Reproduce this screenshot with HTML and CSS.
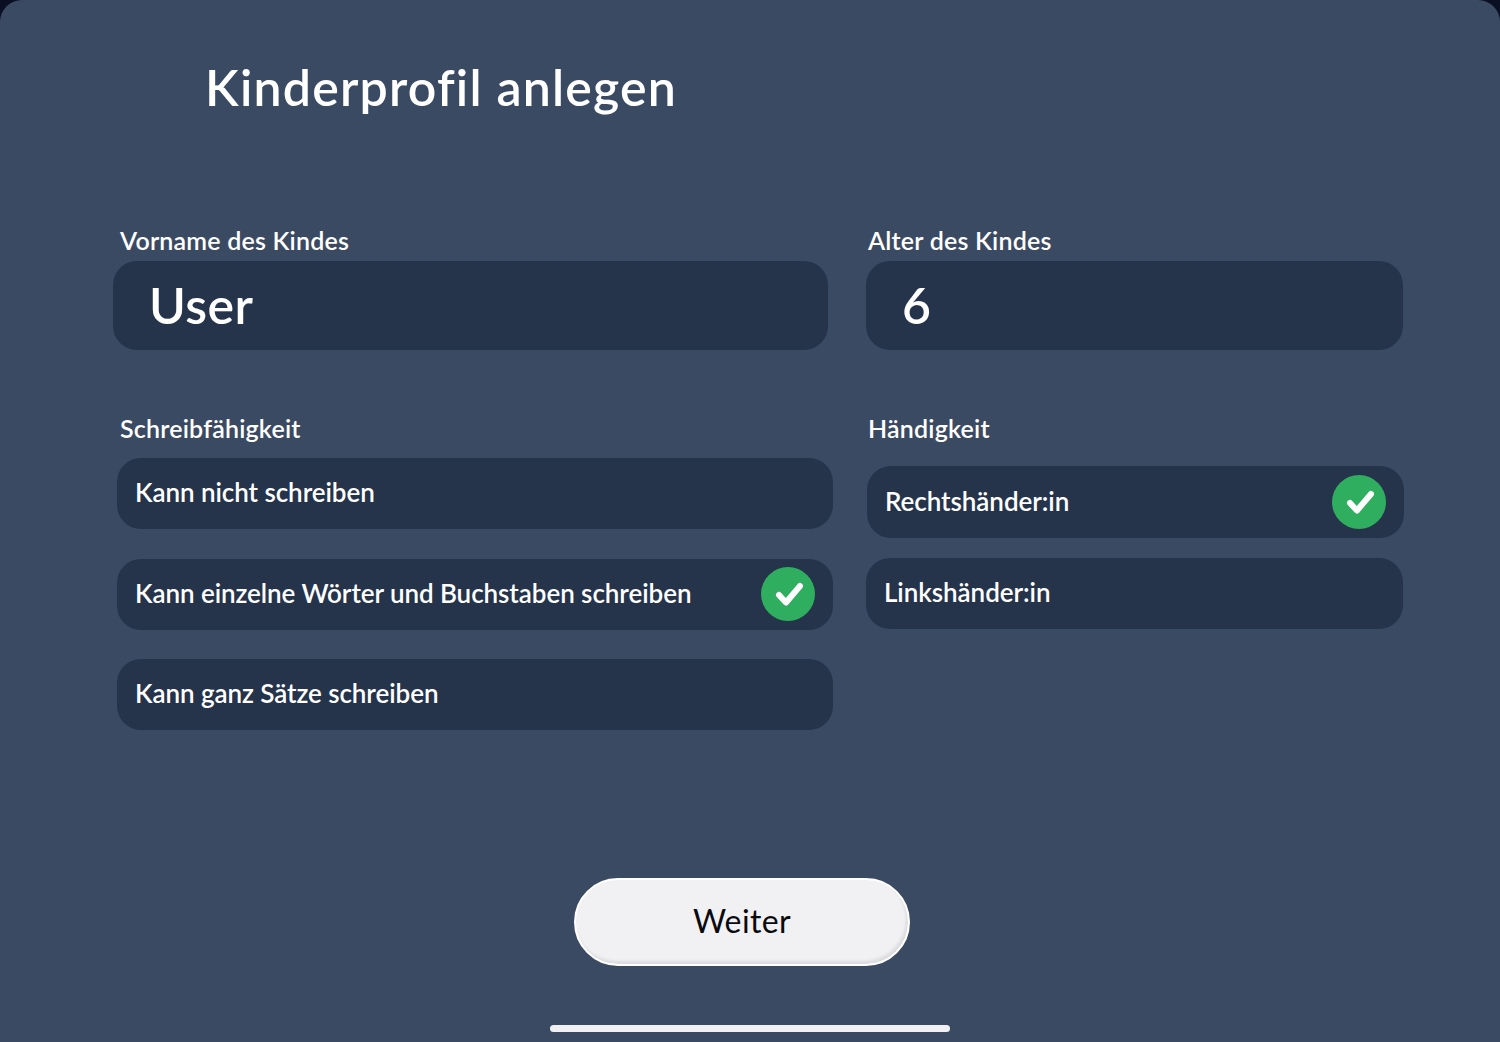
FILE: index.html
```html
<!DOCTYPE html>
<html lang="de">
<head>
    <meta charset="UTF-8">
    <meta name="viewport" content="width=device-width, initial-scale=1.0">
    <title>Kinderprofil anlegen</title>
    <link rel="stylesheet" href="styles.css">
</head>
<body>
    <div class="screen">
        <h1 class="title">Kinderprofil anlegen</h1>
        <div class="form">
            <div class="field">
                <span class="label">Vorname des Kindes</span>
                <div class="input">User</div>
            </div>
            <div class="field field-right">
                <span class="label">Alter des Kindes</span>
                <div class="input">6</div>
            </div>
            <div class="field choices">
                <span class="label">Schreibfähigkeit</span>
                <div class="option"><span class="option-text">Kann nicht schreiben</span></div>
                <div class="option">
                    <span class="option-text">Kann einzelne Wörter und Buchstaben schreiben</span>
                    <svg class="check" viewBox="0 0 54 54"><circle cx="27" cy="27" r="27" fill="#2fae60"/><path d="M18 28l7 7.500L39 19" fill="none" stroke="#fff" stroke-width="6" stroke-linecap="round" stroke-linejoin="round"/></svg>
                </div>
                <div class="option"><span class="option-text">Kann ganz Sätze schreiben</span></div>
            </div>
            <div class="field field-right choices hand">
                <span class="label">Händigkeit</span>
                <div class="option option-first">
                    <span class="option-text">Rechtshänder:in</span>
                    <svg class="check" viewBox="0 0 54 54"><circle cx="27" cy="27" r="27" fill="#2fae60"/><path d="M18 28l7 7.500L39 19" fill="none" stroke="#fff" stroke-width="6" stroke-linecap="round" stroke-linejoin="round"/></svg>
                </div>
                <div class="option"><span class="option-text">Linkshänder:in</span></div>
            </div>
        </div>
        <button class="next-btn">Weiter</button>
        <div class="home-bar"></div>
    </div>
</body>
</html>
```

FILE: styles.css
```css
html, body {
    margin: 0;
    height: 100%;
    background: #0b0f24;
}
body {
    font-family: "Lato", "Noto Sans", sans-serif;
    color: #fff;
    overflow: hidden;
}
.screen {
    height: 1042px;
    box-sizing: border-box;
    background: #3b4a63;
    border-radius: 22px 22px 0 0;
    padding-top: 55px;
    display: flex;
    flex-direction: column;
}
.title {
    margin: 0 0 0 205px;
    font-size: 50px;
    line-height: 64px;
    font-weight: 600;
    letter-spacing: 1.2px;
}
.form {
    margin: 106px 0 0 113px;
    display: grid;
    grid-template-columns: 715px 537px;
    column-gap: 38px;
    row-gap: 63px;
}
.label {
    display: block;
    margin: 0 0 5px 7px;
    font-size: 25px;
    line-height: 31px;
    font-weight: 600;
    letter-spacing: 0.2px;
}
.field-right .label {
    margin-left: 2px;
}
.input {
    height: 89px;
    box-sizing: border-box;
    padding: 0 0 2px 36px;
    display: flex;
    align-items: center;
    background: #25344b;
    border-radius: 24px;
    font-size: 50px;
    font-weight: 600;
    letter-spacing: 0.4px;
}
.choices {
    display: flex;
    flex-direction: column;
}
.choices .label {
    margin-bottom: 14px;
}
.option {
    width: 716px;
    height: 71px;
    box-sizing: border-box;
    margin: 0 0 29.5px 4px;
    padding: 0 18px;
    display: flex;
    align-items: center;
    justify-content: space-between;
    background: #25344b;
    border-radius: 24px;
    font-size: 26px;
    font-weight: 600;
    letter-spacing: -0.06px;
}
.option-text {
    margin-bottom: 3px;
}
.hand .option {
    width: 537px;
    margin-left: 0;
}
.hand .option-first {
    height: 72px;
    margin: 8px 0 20px 1px;
}
.check {
    width: 54px;
    height: 54px;
}
.next-btn {
    align-self: flex-start;
    width: 336px;
    height: 88px;
    margin: 118px 0 0 574px;
    padding: 0 0 3px;
    background: #f1f1f3;
    border: 2px solid #fff;
    border-radius: 44px;
    box-shadow: inset -2px -3px 3px #dcdce0;
    color: #0a0a0f;
    font-family: inherit;
    font-size: 32px;
    font-weight: 400;
    letter-spacing: 0.4px;
}
.home-bar {
    width: 400px;
    height: 7px;
    margin: 59px auto 0;
    background: #f1f1f3;
    border-radius: 4px;
}
```
